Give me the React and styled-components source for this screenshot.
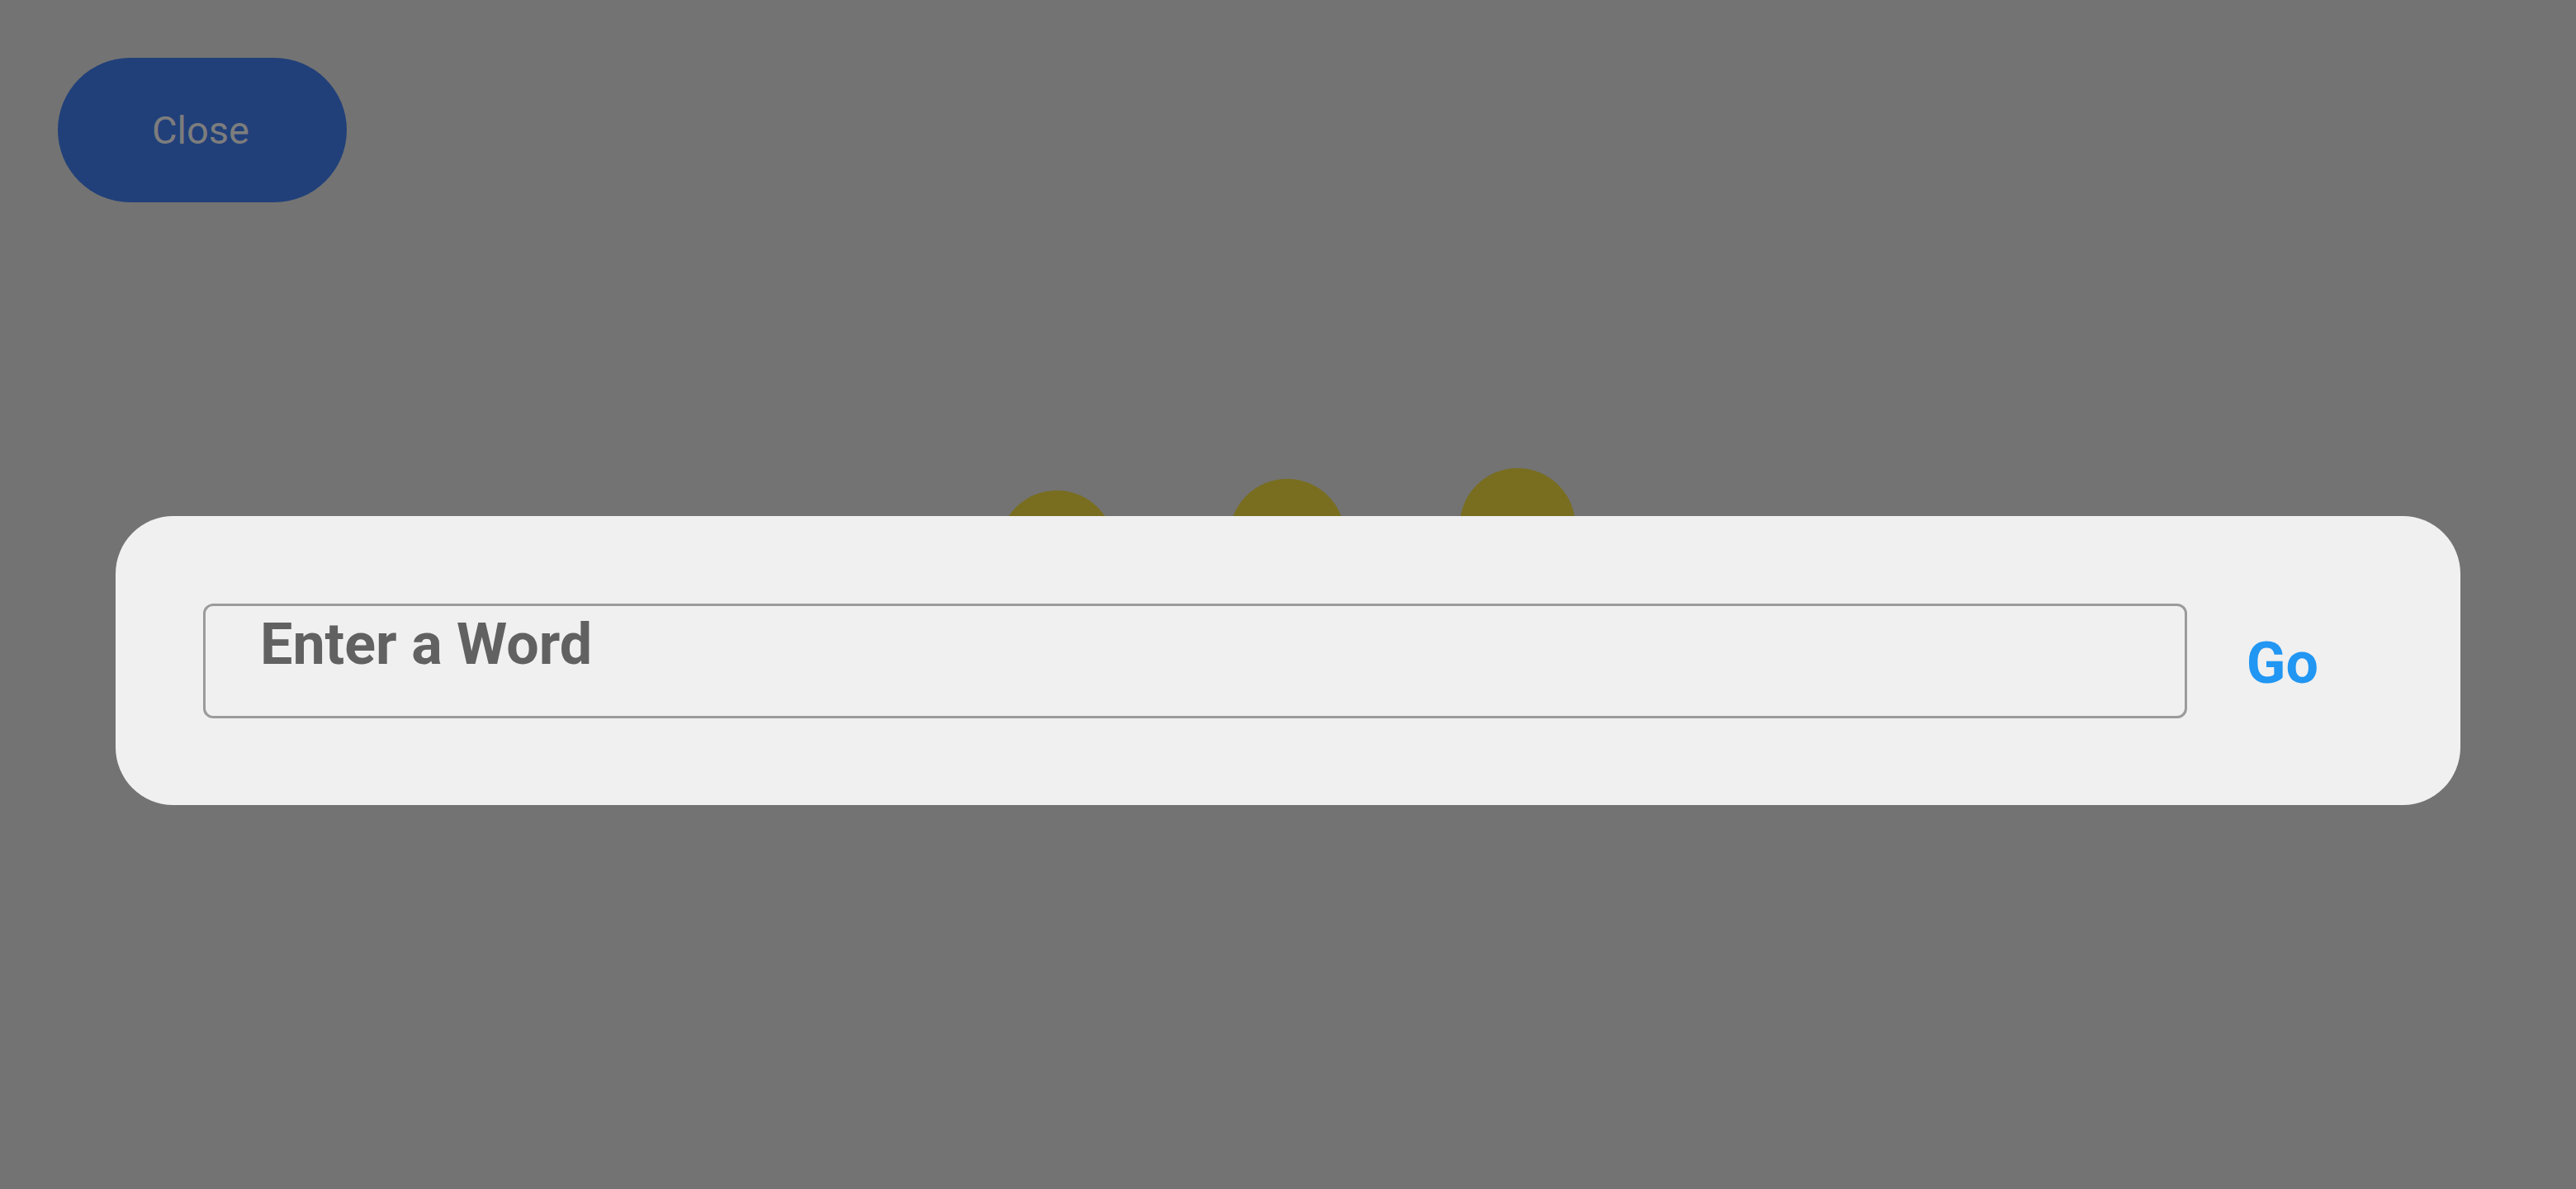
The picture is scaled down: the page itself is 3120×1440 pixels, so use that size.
import React from "react";
import styled, { createGlobalStyle } from "styled-components";

const GlobalStyle = createGlobalStyle`
  html, body {
    margin: 0;
    padding: 0;
    background: #737373;
  }
  body {
    font-family: Roboto, "Noto Sans", "Liberation Sans", sans-serif;
  }
  * { box-sizing: border-box; }
`;

const Page = styled.div`
  position: relative;
  width: 100%;
  min-height: 100vh;
  background: #737373;
  padding-top: 70px;
  overflow: hidden;
`;

const TopBar = styled.div`
  display: flex;
  align-items: center;
  padding-left: 70px;
`;

const CloseButton = styled.button`
  width: 350px;
  height: 175px;
  border: none;
  border-radius: 88px;
  background: #21407a;
  color: #7d7d7d;
  font-family: Roboto, "Liberation Sans", sans-serif;
  font-size: 47px;
  font-weight: 400;
  display: flex;
  align-items: center;
  justify-content: center;
  padding: 0 4px 0 0;
  cursor: pointer;
`;

const Loader = styled.div`
  position: absolute;
  top: 567px;
  left: 1210px;
  display: flex;
  align-items: flex-start;
  gap: 139px;
  z-index: 0;
`;

const Dot = styled.span`
  display: block;
  width: 140px;
  height: 140px;
  border-radius: 50%;
  background: #796e1f;
`;

const Card = styled.div`
  position: relative;
  z-index: 1;
  margin: 380px 140px 0;
  height: 350px;
  background: #f0f0f0;
  border-radius: 70px;
  display: flex;
  align-items: center;
  padding: 0 100px 0 106px;
`;

const WordInput = styled.input`
  flex: 1;
  min-width: 0;
  height: 139px;
  border: 3px solid #9b9b9b;
  border-radius: 12px;
  background: transparent;
  padding: 5px 20px 46px 66px;
  font-family: Roboto, "Liberation Sans", sans-serif;
  font-size: 70px;
  font-weight: 700;
  line-height: 82px;
  color: #616161;
  outline: none;

  &::placeholder {
    color: #616161;
    opacity: 1;
  }
`;

const GoButton = styled.button`
  border: none;
  background: transparent;
  padding: 6px 72px 0;
  font-family: Roboto, "Liberation Sans", sans-serif;
  font-size: 70px;
  font-weight: 700;
  line-height: 82px;
  color: #2196f3;
  cursor: pointer;
`;

const dotOffsets = [27, 13, 0];

export default function App() {
  return (
    <>
      <GlobalStyle />
      <Page>
        <TopBar>
          <CloseButton>Close</CloseButton>
        </TopBar>
        <Loader>
          {dotOffsets.map((o, i) => (
            <Dot key={i} style={{ marginTop: `${o}px` }} />
          ))}
        </Loader>
        <Card>
          <WordInput placeholder="Enter a Word" />
          <GoButton>Go</GoButton>
        </Card>
      </Page>
    </>
  );
}
